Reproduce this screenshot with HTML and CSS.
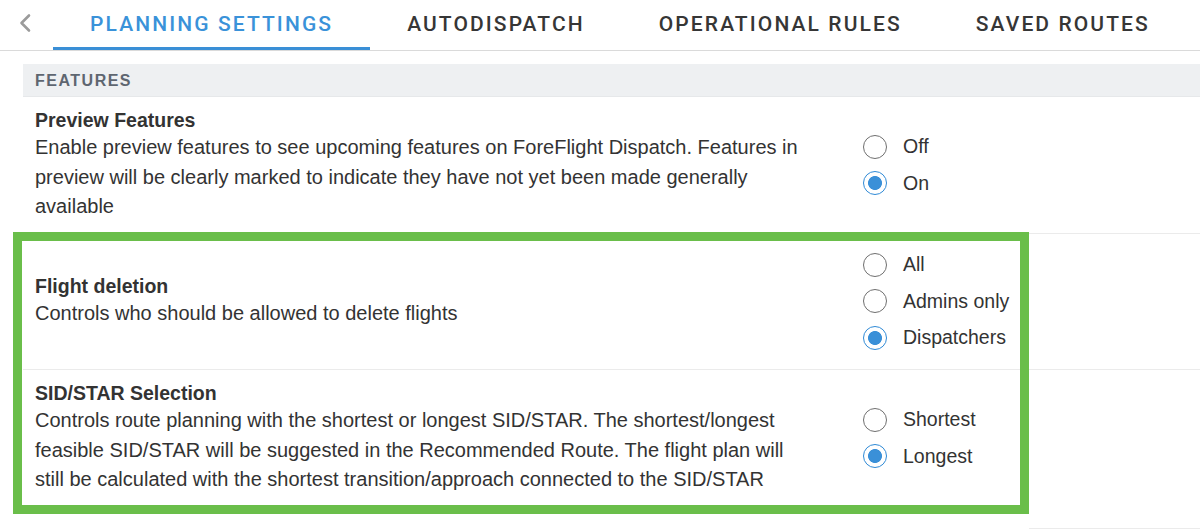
FILE: index.html
```html
<!DOCTYPE html>
<html lang="en">
<head>
<meta charset="utf-8">
<title>Planning Settings</title>
<link rel="stylesheet" href="styles.css">
</head>
<body>
<div class="page">
  <header class="tabbar">
    <button class="back" aria-label="Back">
      <svg width="14" height="20" viewBox="0 0 14 20"><polyline points="11,2.5 3.5,10 11,17.5" fill="none" stroke="#9b9b9b" stroke-width="2.6" stroke-linecap="round" stroke-linejoin="round"/></svg>
    </button>
    <nav class="tab-list">
      <a class="tab active">PLANNING SETTINGS</a>
      <a class="tab">AUTODISPATCH</a>
      <a class="tab">OPERATIONAL RULES</a>
      <a class="tab">SAVED ROUTES</a>
    </nav>
  </header>

  <main class="settings">
    <div class="section-head">FEATURES</div>

    <div class="setting">
      <div class="setting-text">
        <div class="setting-title">Preview Features</div>
        <div class="setting-desc">Enable preview features to see upcoming features on ForeFlight Dispatch. Features in preview will be clearly marked to indicate they have not yet been made generally available</div>
      </div>
      <div class="options">
        <label class="option"><input type="radio" name="preview"><span>Off</span></label>
        <label class="option"><input type="radio" name="preview" checked><span>On</span></label>
      </div>
    </div>

    <div class="setting">
      <div class="setting-text">
        <div class="setting-title">Flight deletion</div>
        <div class="setting-desc">Controls who should be allowed to delete flights</div>
      </div>
      <div class="options">
        <label class="option"><input type="radio" name="deletion"><span>All</span></label>
        <label class="option"><input type="radio" name="deletion"><span>Admins only</span></label>
        <label class="option"><input type="radio" name="deletion" checked><span>Dispatchers</span></label>
      </div>
    </div>

    <div class="setting last">
      <div class="setting-text">
        <div class="setting-title">SID/STAR Selection</div>
        <div class="setting-desc">Controls route planning with the shortest or longest SID/STAR. The shortest/longest feasible SID/STAR will be suggested in the Recommended Route. The flight plan will still be calculated with the shortest transition/approach connected to the SID/STAR</div>
      </div>
      <div class="options">
        <label class="option"><input type="radio" name="sidstar"><span>Shortest</span></label>
        <label class="option"><input type="radio" name="sidstar" checked><span>Longest</span></label>
      </div>
    </div>
  </main>

  <div class="highlight" aria-hidden="true"></div>
</div>
</body>
</html>
```

FILE: styles.css
```css
* { box-sizing: border-box; }

html, body {
  margin: 0;
  background: #ffffff;
}

body {
  font-family: "Liberation Sans", Arial, Helvetica, sans-serif;
  color: #333333;
  width: 1200px;
  height: 530px;
  overflow: hidden;
}

.page {
  position: relative;
  width: 1200px;
}

/* ---------- tab bar ---------- */
.tabbar {
  display: flex;
  height: 51px;
  border-bottom: 1px solid #dadada;
}

.back {
  width: 53px;
  height: 50px;
  border: 0;
  background: none;
  padding: 0 0 4px 18px;
  display: flex;
  align-items: center;
  cursor: pointer;
}

.tab-list {
  display: flex;
}

.tab {
  display: flex;
  align-items: center;
  height: 50px;
  padding: 0 37px;
  border-bottom: 3px solid transparent;
  font-family: Roboto, "Liberation Sans", sans-serif;
  font-weight: 500;
  font-size: 21px;
  letter-spacing: 2.1px;
  color: #363636;
  white-space: nowrap;
  cursor: pointer;
}

.tab.active {
  color: #3a92d9;
  border-bottom-color: #3a8fd6;
}

/* ---------- settings ---------- */
.settings {
  margin-left: 23px;
}

.section-head {
  margin-top: 13px;
  height: 33px;
  line-height: 33px;
  padding-left: 12px;
  background: #eef0f2;
  border-bottom: 1px solid #e6e8ea;
  font-size: 16px;
  font-weight: 700;
  letter-spacing: 1.5px;
  color: #5e6670;
}

.setting {
  display: grid;
  grid-template-columns: 828px auto;
  align-items: center;
  padding: 11px 0 11px 12px;
  border-bottom: 1px solid #ebebeb;
}

.setting.last {
  padding-bottom: 33px;
}

.setting-text {
  max-width: 770px;
}

.setting-title {
  font-size: 19.5px;
  font-weight: 700;
  line-height: 25px;
  color: #333333;
}

.setting-desc {
  font-size: 20px;
  line-height: 29.5px;
  color: #333333;
}

.options {
  display: flex;
  flex-direction: column;
  padding: 2px 0;
}

.option {
  display: flex;
  align-items: center;
  gap: 16px;
  height: 36.5px;
  font-size: 19.5px;
  color: #333333;
  cursor: pointer;
}

.option input {
  appearance: none;
  -webkit-appearance: none;
  margin: 0;
  width: 24px;
  height: 24px;
  border: 1.5px solid #6f6f6f;
  border-radius: 50%;
  background: #ffffff;
  flex: none;
}

.option input:checked {
  border-color: #2f8ad6;
  background: radial-gradient(circle closest-side, #3a90d8 0 6.6px, #ffffff 7.3px);
}

/* ---------- annotation overlay ---------- */
.highlight {
  position: absolute;
  left: 13px;
  top: 232px;
  width: 1016px;
  height: 282px;
  border: 9px solid #6abe4a;
  box-shadow: 0 15px 0 0 #ffffff;
  pointer-events: none;
}
```
